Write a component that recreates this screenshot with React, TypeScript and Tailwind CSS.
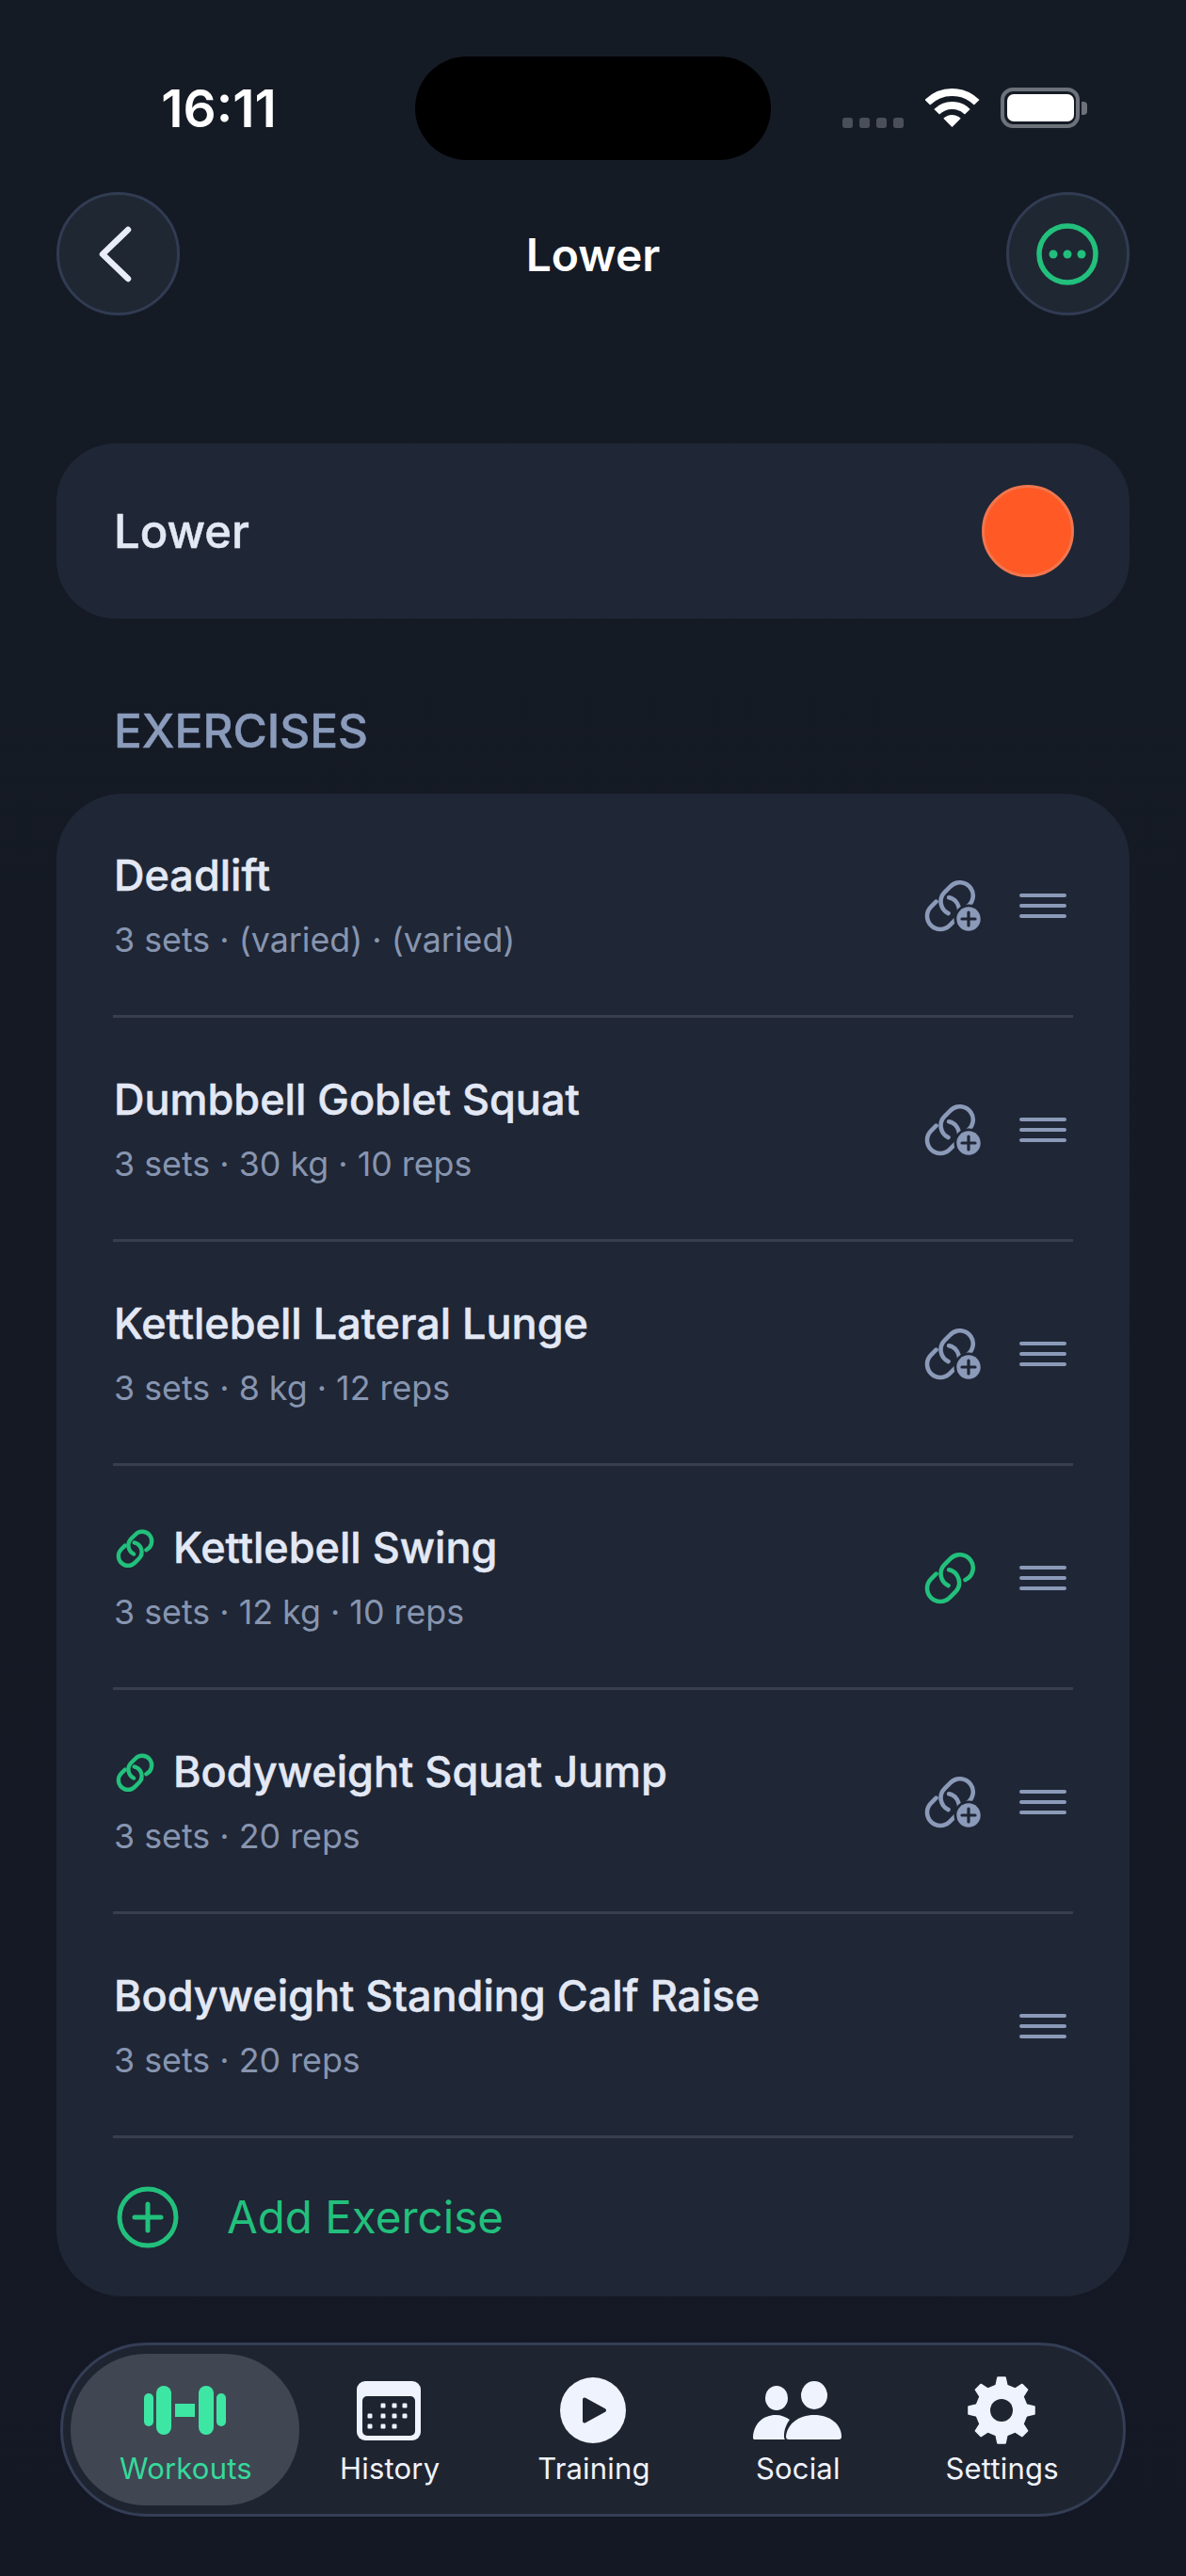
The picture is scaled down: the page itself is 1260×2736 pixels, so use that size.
import React from "react";

const linkA = "M55.5 43A14 14 0 1 0 39.6 20.6L33.6 26.6A14 14 0 0 0 37.5 49.1";
const linkB = "M24.5 36.7L19.1 42.1A14 14 0 0 0 38.9 61.9L44.9 55.9A14 14 0 0 0 38.1 32.3";

function LinkIcon({ size, stroke, color }: { size: number; stroke: number; color: string }) {
  return (
    <svg width={size} height={size} viewBox="0 0 80 80" fill="none" stroke={color} strokeWidth={stroke} strokeLinecap="round" className="block">
      <path d={linkA} />
      <path d={linkB} />
    </svg>
  );
}

function LinkPlus() {
  return (
    <svg width="80" height="80" viewBox="0 0 80 80" fill="none" className="block">
      <g stroke="#8b9ab8" strokeWidth="4.6" strokeLinecap="round">
        <path d={linkA} />
        <path d={linkB} />
      </g>
      <circle cx="59" cy="55" r="15.5" fill="#1f2635" />
      <circle cx="59" cy="55" r="12.7" fill="#8b9ab8" />
      <path d="M59 48v14M52 55h14" stroke="#1f2635" strokeWidth="3.2" strokeLinecap="round" />
    </svg>
  );
}

function Handle() {
  return (
    <div className="flex w-[50px] flex-col gap-[7px]">
      <div className="h-[4px] rounded-full bg-[#8b9ab8]" />
      <div className="h-[4px] rounded-full bg-[#8b9ab8]" />
      <div className="h-[4px] rounded-full bg-[#8b9ab8]" />
    </div>
  );
}

type Row = { name: string; sub: string; linked?: boolean; action: "plus" | "green" | "none" };
const rows: Row[] = [
  { name: "Deadlift", sub: "3 sets · (varied) · (varied)", action: "plus" },
  { name: "Dumbbell Goblet Squat", sub: "3 sets · 30 kg · 10 reps", action: "plus" },
  { name: "Kettlebell Lateral Lunge", sub: "3 sets · 8 kg · 12 reps", action: "plus" },
  { name: "Kettlebell Swing", sub: "3 sets · 12 kg · 10 reps", linked: true, action: "green" },
  { name: "Bodyweight Squat Jump", sub: "3 sets · 20 reps", linked: true, action: "plus" },
  { name: "Bodyweight Standing Calf Raise", sub: "3 sets · 20 reps", action: "none" },
];

function ExerciseRow({ row }: { row: Row }) {
  return (
    <div className="mx-[60px] flex h-[238px] items-center justify-between border-b-[3px] border-[#383e4e]">
      <div className="flex flex-col pl-[1px]">
        <div className="flex h-[56px] items-center">
          {row.linked && (
            <span className="mr-[11px] ml-[-6px] block">
              <LinkIcon size={58} stroke={6} color="#22c07c" />
            </span>
          )}
          <span className="text-[45px] leading-[56px] font-medium text-[#e3e8f5] [-webkit-text-stroke:0.5px_#e3e8f5]">{row.name}</span>
        </div>
        <span className="mt-[18px] text-[35.8px] leading-[44px] text-[#8795b0]">{row.sub}</span>
      </div>
      <div className="mt-[3px] flex items-center">
        {row.action === "plus" && (
          <span className="mt-[-3px] mr-[33px] block">
            <LinkPlus />
          </span>
        )}
        {row.action === "green" && (
          <span className="mt-[-3px] mr-[33px] block">
            <LinkIcon size={80} stroke={4.6} color="#22c07c" />
          </span>
        )}
        <span className="mr-[7px] block">
          <Handle />
        </span>
      </div>
    </div>
  );
}

function Wifi() {
  return (
    <svg width="58" height="43" viewBox="0 0 58 43" fill="none">
      <path d="M2.3 15.8A37 37 0 0 1 54.7 15.8" stroke="#fff" strokeWidth="8" />
      <path d="M12.2 25.7A23 23 0 0 1 44.8 25.7" stroke="#fff" strokeWidth="8" />
      <path d="M28.5 42L19.3 32.8A13 13 0 0 1 37.7 32.8Z" fill="#fff" />
    </svg>
  );
}

function Dumbbell() {
  return (
    <svg width="87" height="52" viewBox="0 0 87 52" fill="#3ee6a4">
      <rect x="0" y="8" width="10" height="35" rx="5" />
      <rect x="13" y="0" width="16" height="52" rx="8" />
      <rect x="33" y="19" width="21" height="14" />
      <rect x="58" y="0" width="16" height="52" rx="8" />
      <rect x="77" y="8" width="10" height="35" rx="5" />
    </svg>
  );
}

function CalendarIcon() {
  const dots: [number, number][] = [
    [28, 26], [40, 26], [51, 26],
    [14, 37], [28, 37], [40, 37], [51, 37],
    [14, 48], [28, 48], [40, 48],
  ];
  return (
    <svg width="68" height="63" viewBox="0 0 68 63">
      <rect width="68" height="63" rx="9" fill="#eff3fd" />
      <rect x="6" y="16" width="56" height="42" rx="5" fill="#1f2530" />
      {dots.map(([x, y]) => (
        <rect key={`${x}-${y}`} x={x - 2.5} y={y - 2.5} width="5" height="5" rx="1.2" fill="#eff3fd" />
      ))}
    </svg>
  );
}

function PlayIcon() {
  return (
    <svg width="70" height="70" viewBox="0 0 70 70">
      <circle cx="35" cy="35" r="35" fill="#eff3fd" />
      <path d="M26 23.5L47 35L26 46.5Z" fill="#1f2530" stroke="#1f2530" strokeWidth="4" strokeLinejoin="round" />
    </svg>
  );
}

function SocialIcon() {
  return (
    <svg width="94" height="62" viewBox="0 0 94 62" fill="#eff3fd">
      <ellipse cx="25" cy="18" rx="12" ry="13" />
      <ellipse cx="65" cy="15" rx="14" ry="15" />
      <path d="M1 62a3 3 0 0 1-1-3C1 45 11 36 24 36c6 0 11 2 15 5-3 4-6 10-6 17 0 2 0 3 1 4Z" />
      <path d="M38 62a3 3 0 0 1-3-3C36 46 48 36 65 36s29 10 29 23a3 3 0 0 1-3 3Z" />
    </svg>
  );
}

function gearPath() {
  const cx = 36, cy = 36, n = 8, R = 35, r = 27;
  const pts: string[] = [];
  for (let i = 0; i < n; i++) {
    const a = (i * 2 * Math.PI) / n - Math.PI / 2;
    const step = (2 * Math.PI) / n;
    const seq: [number, number][] = [
      [r, a - step * 0.27],
      [R, a - step * 0.14],
      [R, a + step * 0.14],
      [r, a + step * 0.27],
    ];
    seq.forEach(([rad, ang]) => pts.push(`${(cx + rad * Math.cos(ang)).toFixed(2)} ${(cy + rad * Math.sin(ang)).toFixed(2)}`));
  }
  return `M${pts.join("L")}Z`;
}

function GearIcon() {
  return (
    <svg width="72" height="72" viewBox="0 0 72 72">
      <path d={gearPath()} fill="#eff3fd" stroke="#eff3fd" strokeWidth="2" strokeLinejoin="round" />
      <circle cx="36" cy="36" r="12" fill="#1f2530" />
    </svg>
  );
}

function NavItem({ label, icon, active }: { label: string; icon: React.ReactNode; active?: boolean }) {
  return (
    <div className={active ? "mx-[-13px] flex h-[161px] flex-col items-center rounded-[80px] bg-[#404652]" : "flex h-[161px] flex-col items-center"}>
      <div className="mt-[24px] flex h-[72px] items-center justify-center">{icon}</div>
      <span className={active ? "mt-[4px] pl-[2px] text-[31px] leading-[44px] tracking-[0.2px] text-[#36d99b]" : "mt-[4px] pl-[2px] text-[31px] leading-[44px] tracking-[0.2px] text-[#eff3fd]"}>
        {label}
      </span>
    </div>
  );
}

export default function App() {
  return (
    <div className="flex h-[2736px] w-[1260px] flex-col overflow-hidden bg-gradient-to-b from-[#151b25] to-[#141824] font-[family-name:Inter,sans-serif] pt-[60px]">
      {/* Status bar */}
      <div className="flex h-[110px] items-start">
        <div className="flex h-[110px] w-[441px] items-center justify-center pl-[24px]">
          <span className="text-[55px] leading-[60px] font-semibold text-white">16:11</span>
        </div>
        <div className="h-[110px] w-[378px] rounded-[55px] bg-black" />
        <div className="flex h-[76px] flex-1 items-end pl-[76px]">
          <div className="flex gap-[7px]">
            <div className="h-[11px] w-[11px] rounded-[3px] bg-[#4a4f5a]" />
            <div className="h-[11px] w-[11px] rounded-[3px] bg-[#4a4f5a]" />
            <div className="h-[11px] w-[11px] rounded-[3px] bg-[#4a4f5a]" />
            <div className="h-[11px] w-[11px] rounded-[3px] bg-[#4a4f5a]" />
          </div>
          <div className="ml-[23px] block h-[43px]">
            <Wifi />
          </div>
          <div className="ml-[22px] flex h-[43px] items-center">
            <div className="flex h-[43px] w-[84px] items-center justify-center rounded-[13px] border-[4px] border-[#6d717a]">
              <div className="h-[29px] w-[71px] rounded-[7px] bg-white" />
            </div>
            <div className="ml-[2px] h-[14px] w-[6px] rounded-r-[4px] bg-[#6d717a]" />
          </div>
        </div>
      </div>

      {/* Header */}
      <div className="mx-[60px] mt-[34px] flex h-[131px] items-center justify-between">
        <div className="flex h-[131px] w-[131px] items-center justify-center rounded-full border-[3px] border-[#313c53] bg-[#1f2732]">
          <svg width="38" height="62" viewBox="0 0 38 62" fill="none" className="mr-[8px]">
            <path d="M33 5L6 31L33 57" stroke="#e8edf8" strokeWidth="6.5" strokeLinecap="round" strokeLinejoin="round" />
          </svg>
        </div>
        <span className="mt-[3px] text-[48px] font-semibold text-white">Lower</span>
        <div className="flex h-[131px] w-[131px] items-center justify-center rounded-full border-[3px] border-[#313c53] bg-[#1f2732]">
          <svg width="66" height="66" viewBox="0 0 66 66" fill="none">
            <circle cx="33" cy="33" r="30" stroke="#22c07c" strokeWidth="5.5" />
            <circle cx="18" cy="33" r="4.5" fill="#22c07c" />
            <circle cx="33" cy="33" r="4.5" fill="#22c07c" />
            <circle cx="48" cy="33" r="4.5" fill="#22c07c" />
          </svg>
        </div>
      </div>

      {/* Name card */}
      <div className="mx-[60px] mt-[136px] flex h-[186px] items-center justify-between rounded-[62px] bg-[#1f2635] pr-[59px] pl-[61px]">
        <span className="mt-[2px] text-[49px] font-medium text-[#e3e8f5] [-webkit-text-stroke:0.5px_#e3e8f5]">Lower</span>
        <div className="h-[98px] w-[98px] rounded-full border-[3px] border-[#f0764e] bg-[#ff5a26]" />
      </div>

      <div className="mt-[89px] flex h-[60px] items-center pl-[121px]">
        <span className="text-[49.5px] font-medium text-[#8a9bbb] [-webkit-text-stroke:0.5px_#8a9bbb]">EXERCISES</span>
      </div>

      {/* Exercises */}
      <div className="mx-[60px] mt-[37px] flex flex-col rounded-[70px] bg-[#1f2635]">
        {rows.map((r) => (
          <ExerciseRow key={r.name} row={r} />
        ))}
        <div className="flex h-[168px] items-center pl-[64px]">
          <svg width="66" height="66" viewBox="0 0 66 66" fill="none">
            <circle cx="33" cy="33" r="30" stroke="#22c07c" strokeWidth="5" />
            <path d="M33 19v28M19 33h28" stroke="#22c07c" strokeWidth="5" strokeLinecap="round" />
          </svg>
          <span className="ml-[51px] text-[47.5px] text-[#22c07c]">Add Exercise</span>
        </div>
      </div>

      {/* Bottom nav */}
      <div className="mx-[64px] mt-[49px] grid h-[185px] grid-cols-5 items-center rounded-[92px] border-[3px] border-[#343e56] bg-[#1f2530] px-[21px]">
        <NavItem label="Workouts" icon={<Dumbbell />} active />
        <NavItem label="History" icon={<CalendarIcon />} />
        <NavItem label="Training" icon={<PlayIcon />} />
        <NavItem label="Social" icon={<SocialIcon />} />
        <NavItem label="Settings" icon={<GearIcon />} />
      </div>
    </div>
  );
}
